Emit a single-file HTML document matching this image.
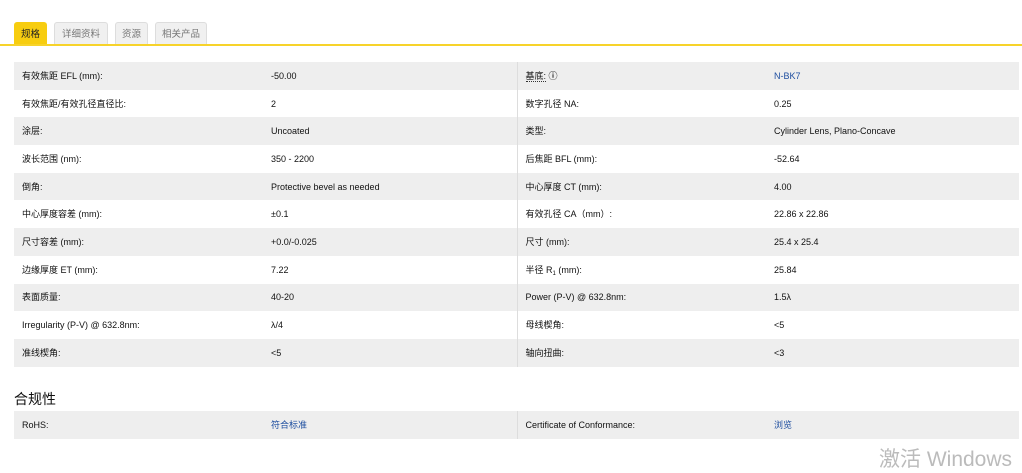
<!DOCTYPE html>
<html><head><meta charset="utf-8"><style>
body{margin:0;width:1022px;height:463px;overflow:hidden;background:#fff;font-family:"Liberation Sans","Noto Sans CJK SC",sans-serif;font-size:9px;color:#111;position:relative}
.tab{position:absolute;top:22px;height:23px;line-height:24px;font-size:9.5px;color:#777;background:#f0f0f0;border:1px solid #ddd;border-bottom:none;border-radius:3px 3px 0 0;box-sizing:border-box;text-align:center}
.tab.on{background:#f7cd10;color:#222;border-color:#f7cd10}
.line{position:absolute;left:0;top:44px;width:1022px;height:2px;background:#f7d32a}
table{position:absolute;left:14px;border-collapse:collapse;width:1005px;table-layout:fixed}
td{height:27.7px;padding:0 0 0 8px;white-space:nowrap;line-height:12px}
tr:nth-child(odd) td{background:#eee}
td:nth-child(3){border-left:1px solid #ddd}
a{color:#1f4fa0;text-decoration:none}
sub{font-size:6px;line-height:0;vertical-align:-2px}
h3{position:absolute;left:14px;top:389px;margin:0;font-size:14px;font-weight:normal}
.wm{position:absolute;left:879px;top:447px;font-size:21px;color:#bbb;line-height:26px}
</style></head><body>
<div class="tab on" style="left:14px;width:33px">规格</div>
<div class="tab" style="left:54px;width:54px">详细资料</div>
<div class="tab" style="left:115px;width:33px">资源</div>
<div class="tab" style="left:155px;width:52px">相关产品</div>
<div class="line"></div>
<table style="top:62px">
<colgroup><col style="width:249px"><col style="width:254px"><col style="width:249px"><col></colgroup>
<tr><td>有效焦距 EFL (mm):</td><td>-50.00</td><td><span style="border-bottom:1px dotted #333">基底:</span> <b>ⓘ</b></td><td><a>N-BK7</a></td></tr>
<tr><td>有效焦距/有效孔径直径比:</td><td>2</td><td>数字孔径 NA:</td><td>0.25</td></tr>
<tr><td>涂层:</td><td>Uncoated</td><td>类型:</td><td>Cylinder Lens, Plano-Concave</td></tr>
<tr><td>波长范围 (nm):</td><td>350 - 2200</td><td>后焦距 BFL (mm):</td><td>-52.64</td></tr>
<tr><td>倒角:</td><td>Protective bevel as needed</td><td>中心厚度 CT (mm):</td><td>4.00</td></tr>
<tr><td>中心厚度容差 (mm):</td><td>±0.1</td><td>有效孔径 CA（mm）:</td><td>22.86 x 22.86</td></tr>
<tr><td>尺寸容差 (mm):</td><td>+0.0/-0.025</td><td>尺寸 (mm):</td><td>25.4 x 25.4</td></tr>
<tr><td>边缘厚度 ET (mm):</td><td>7.22</td><td>半径 R<sub>1</sub> (mm):</td><td>25.84</td></tr>
<tr><td>表面质量:</td><td>40-20</td><td>Power (P-V) @ 632.8nm:</td><td>1.5λ</td></tr>
<tr><td>Irregularity (P-V) @ 632.8nm:</td><td>λ/4</td><td>母线楔角:</td><td>&lt;5</td></tr>
<tr><td>准线楔角:</td><td>&lt;5</td><td>轴向扭曲:</td><td>&lt;3</td></tr>
</table>
<h3>合规性</h3>
<table style="top:411px">
<colgroup><col style="width:249px"><col style="width:254px"><col style="width:249px"><col></colgroup>
<tr><td>RoHS:</td><td><a>符合标准</a></td><td>Certificate of Conformance:</td><td><a>浏览</a></td></tr>
</table>
<div class="wm">激活 Windows</div>
</body></html>
